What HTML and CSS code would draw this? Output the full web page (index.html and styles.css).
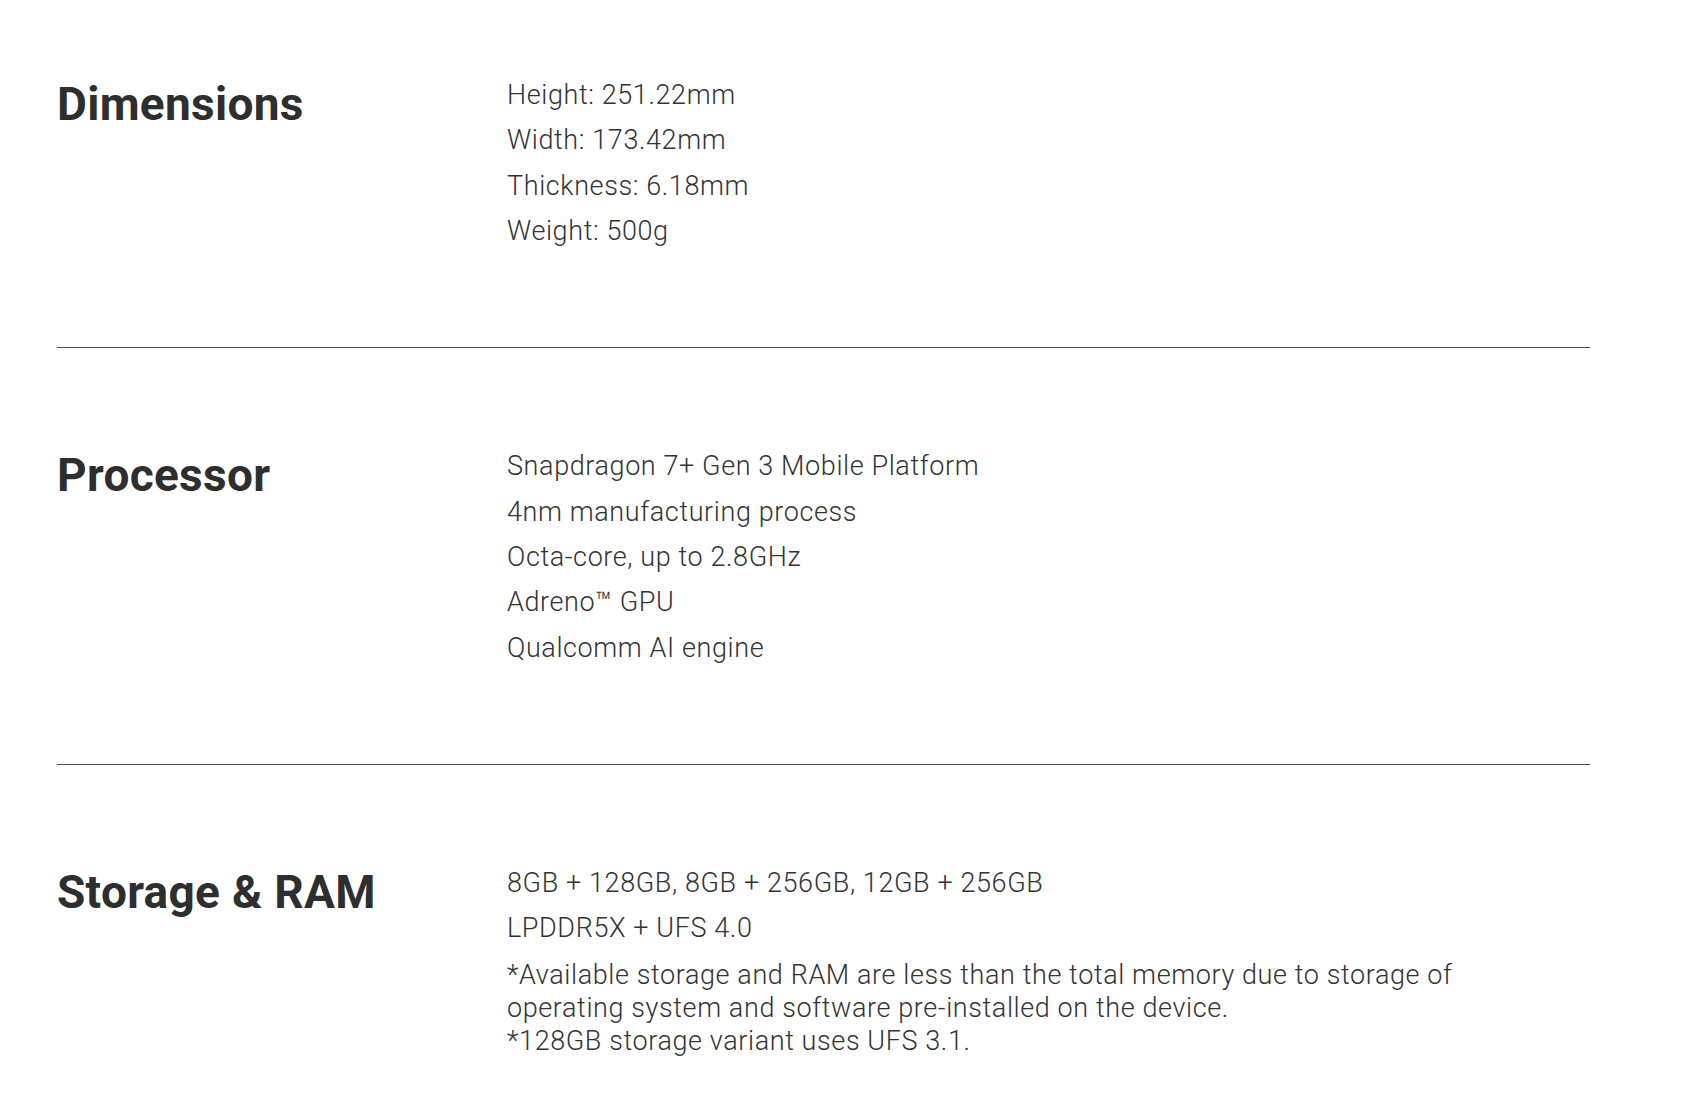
FILE: index.html
```html
<!DOCTYPE html>
<html lang="en">
<head>
<meta charset="utf-8">
<title>Specs</title>
<link rel="stylesheet" href="styles.css">
</head>
<body>
<main class="specs">
  <section class="spec spec-first">
    <h2 class="spec-title">Dimensions</h2>
    <div class="spec-body">
      <p class="spec-line">Height: 251.22mm</p>
      <p class="spec-line">Width: 173.42mm</p>
      <p class="spec-line">Thickness: 6.18mm</p>
      <p class="spec-line">Weight: 500g</p>
    </div>
  </section>
  <section class="spec">
    <h2 class="spec-title">Processor</h2>
    <div class="spec-body">
      <p class="spec-line">Snapdragon 7+ Gen 3 Mobile Platform</p>
      <p class="spec-line">4nm manufacturing process</p>
      <p class="spec-line">Octa-core, up to 2.8GHz</p>
      <p class="spec-line">Adreno™ GPU</p>
      <p class="spec-line">Qualcomm AI engine</p>
    </div>
  </section>
  <section class="spec spec-last">
    <h2 class="spec-title">Storage &amp; RAM</h2>
    <div class="spec-body">
      <p class="spec-line">8GB + 128GB, 8GB + 256GB, 12GB + 256GB</p>
      <p class="spec-line">LPDDR5X + UFS 4.0</p>
      <p class="spec-note">*Available storage and RAM are less than the total memory due to storage of<br>operating system and software pre-installed on the device.<br>*128GB storage variant uses UFS 3.1.</p>
    </div>
  </section>
</main>
</body>
</html>
```
FILE: styles.css
```css
html, body {
  margin: 0;
  padding: 0;
  background: #ffffff;
}

body {
  font-family: Roboto, "Liberation Sans", sans-serif;
  color: #333333;
}

.specs {
  width: 1533px;
  margin-left: 57px;
}

.spec {
  display: grid;
  grid-template-columns: 450px 1fr;
  padding: 96px 0 93px;
  border-bottom: 1px solid #4d4d4d;
}

.spec-first {
  padding-top: 73px;
}

.spec-last {
  border-bottom: none;
  padding-bottom: 20px;
}

.spec-title {
  margin: 4px 0 0;
  font-size: 46px;
  line-height: 1.2;
  font-weight: 700;
  color: #2e2e2e;
  letter-spacing: 0.3px;
}

.spec-body {
  display: flex;
  flex-direction: column;
}

.spec-line {
  margin: 0;
  font-size: 27px;
  line-height: 45.35px;
  font-weight: 300;
  letter-spacing: 0.6px;
  color: #333333;
}

.spec-note {
  margin: 7px 0 0;
  font-size: 27px;
  line-height: 33px;
  font-weight: 300;
  letter-spacing: 0.6px;
  color: #333333;
}
```
